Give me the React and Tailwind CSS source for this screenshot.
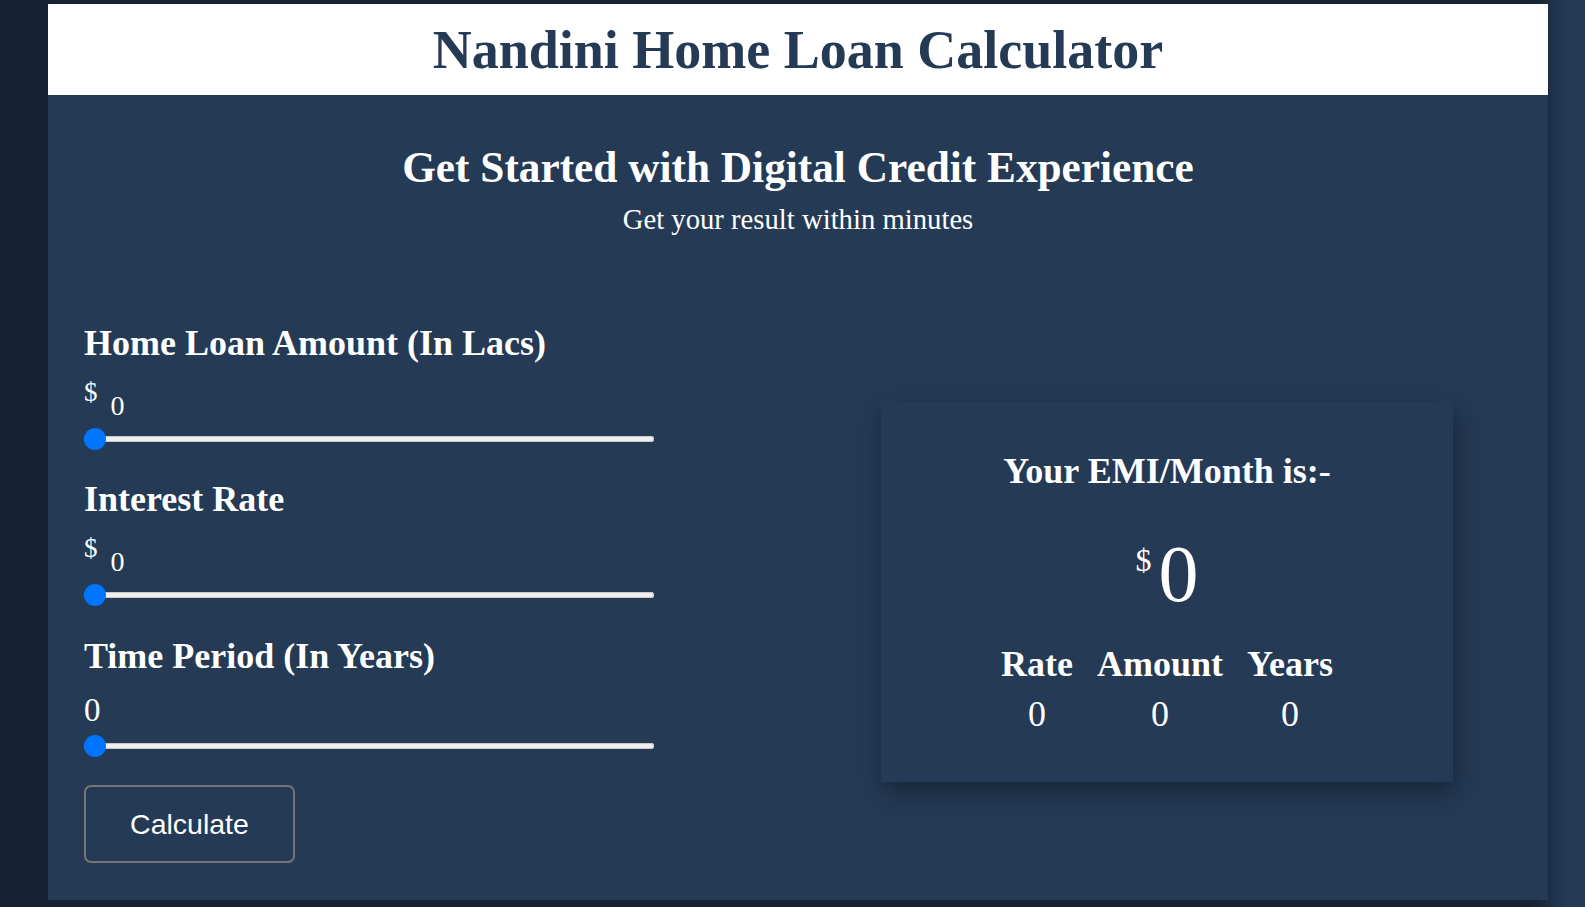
import { useState } from "react";

const sliderClass =
    "w-[570px] h-[22px] appearance-none bg-transparent cursor-pointer block " +
    "[&::-webkit-slider-runnable-track]:h-[6px] [&::-webkit-slider-runnable-track]:rounded-full [&::-webkit-slider-runnable-track]:bg-[#efefef] [&::-webkit-slider-runnable-track]:shadow-[inset_0_0_0_1px_#c9c9c9] " +
    "[&::-webkit-slider-thumb]:appearance-none [&::-webkit-slider-thumb]:w-[22px] [&::-webkit-slider-thumb]:h-[22px] [&::-webkit-slider-thumb]:rounded-full [&::-webkit-slider-thumb]:bg-[#0075ff] [&::-webkit-slider-thumb]:mt-[-8px]";

const MoneyField = ({ label, value, onChange, max }) => (
    <div>
        <h3 className="text-[36px] font-bold leading-[40px]">{label}</h3>
        <div className="flex items-start mt-[16px] h-[40px]">
            <span className="text-[27px] leading-none">$</span>
            <span className="text-[28px] leading-none ml-[13px] mt-[13px]">{value}</span>
        </div>
        <input
            type="range"
            min="0"
            max={max}
            value={value}
            onChange={(e) => onChange(Number(e.target.value))}
            className={`${sliderClass} mt-[9px]`}
        />
    </div>
);

const App = () => {
    const [amount, setAmount] = useState(0);
    const [rate, setRate] = useState(0);
    const [years, setYears] = useState(0);
    const [emi, setEmi] = useState(0);

    const calculate = () => {
        const r = rate / 12 / 100;
        const n = years * 12;
        const p = amount * 100000;
        if (!p || !n) return setEmi(0);
        if (!r) return setEmi(Math.round(p / n));
        const x = Math.pow(1 + r, n);
        setEmi(Math.round((p * r * x) / (x - 1)));
    };

    return (
        <div className="min-h-screen bg-[#243a55] pt-[4px] pl-[48px] font-['Liberation_Serif','Times_New_Roman',serif] text-white">
            <div className="w-[1500px] bg-[#243a55] shadow-[-45px_0_20px_45px_rgba(0,0,0,0.4)]">
                {/* header */}
                <header className="h-[91px] bg-white flex items-center justify-center">
                    <h1 className="text-[54px] font-bold leading-none text-[#243a55]">
                        Nandini Home Loan Calculator
                    </h1>
                </header>

                <section className="text-center pt-[51px]">
                    <h2 className="text-[43.3px] font-bold leading-none">
                        Get Started with Digital Credit Experience
                    </h2>
                    <p className="text-[28.7px] leading-none mt-[16px]">Get your result within minutes</p>
                </section>

                <div className="flex justify-between items-start mt-[89px] pl-[36px] pr-[95px] pb-[37px]">
                    {/* inputs */}
                    <div className="w-[570px]">
                        <MoneyField label="Home Loan Amount (In Lacs)" value={amount} onChange={setAmount} max={500} />
                        <div className="mt-[29px]">
                            <MoneyField label="Interest Rate" value={rate} onChange={setRate} max={20} />
                        </div>
                        <div className="mt-[30px]">
                            <h3 className="text-[36px] font-bold leading-[40px]">Time Period (In Years)</h3>
                            <p className="text-[33px] leading-none mt-[18px]">{years}</p>
                            <input
                                type="range"
                                min="0"
                                max="30"
                                value={years}
                                onChange={(e) => setYears(Number(e.target.value))}
                                className={`${sliderClass} mt-[8px]`}
                            />
                        </div>
                        <button
                            onClick={calculate}
                            className="mt-[28px] w-[211px] h-[78px] border-2 border-[#767676] rounded-[7px] bg-transparent text-white text-[28.5px] font-['Liberation_Sans',Arial,sans-serif]"
                        >
                            Calculate
                        </button>
                    </div>

                    {/* result card */}
                    <div className="mt-[78px] w-[572px] h-[381px] bg-[#243a55] shadow-[2px_10px_25px_rgba(0,0,0,0.35)] flex flex-col items-center pt-[52px]">
                        <h3 className="text-[36px] font-bold leading-none">Your EMI/Month is:-</h3>
                        <div className="flex items-start mt-[45px] gap-[7px]">
                            <span className="text-[32px] leading-none mt-[10px]">$</span>
                            <span className="text-[80px] leading-none">{emi}</span>
                        </div>
                        <div className="grid grid-cols-[auto_auto_auto] gap-x-[24px] mt-[32px] text-center">
                            <span className="text-[36px] font-bold leading-none">Rate</span>
                            <span className="text-[36px] font-bold leading-none">Amount</span>
                            <span className="text-[36px] font-bold leading-none">Years</span>
                            <span className="text-[36px] leading-none mt-[14px]">{rate}</span>
                            <span className="text-[36px] leading-none mt-[14px]">{amount}</span>
                            <span className="text-[36px] leading-none mt-[14px]">{years}</span>
                        </div>
                    </div>
                </div>
            </div>
        </div>
    );
};

export default App;
